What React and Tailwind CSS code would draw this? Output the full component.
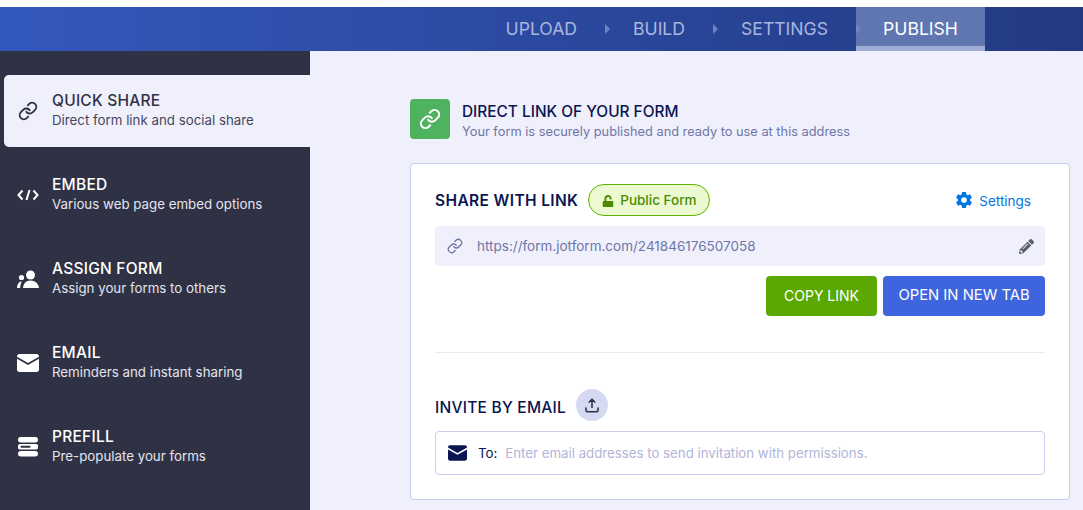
import { Link } from 'lucide-react';
import { FaPencilAlt, FaUnlock } from 'react-icons/fa';
import { IoSettingsSharp } from 'react-icons/io5';

function CodeIcon() {
  return (
    <svg width="22" height="12" viewBox="0 0 22 12" fill="none" stroke="white" strokeWidth="2">
      <path d="M5.500 1.500 1.500 6l4 4.500M16.500 1.500l4 4.500-4 4.500M12.500 1 9.500 11" />
    </svg>
  );
}

function UsersIcon() {
  return (
    <svg width="22" height="18" viewBox="0 0 22 18" fill="white">
      <circle cx="13.500" cy="5" r="4.500" />
      <circle cx="4.500" cy="7.500" r="2.600" />
      <path d="M6 18c.3-4.500 3-7.500 7.500-7.500S21.500 13.500 22 18H6Z" />
      <path d="M0 18c.2-3.500 1.600-6.200 4.800-6.800-.9 1.800-1.500 4-1.700 6.800H0Z" />
    </svg>
  );
}

function MailIcon({ color = 'white', width = 22, height = 18 }) {
  return (
    <svg width={width} height={height} viewBox="0 0 22 18">
      <path fill={color} d="M2.500 0h17C21 0 22 1 22 2.500v13c0 1.500-1 2.500-2.500 2.500h-17C1 18 0 17 0 15.500v-13C0 1 1 0 2.500 0Z" />
      <path fill="none" stroke={color === 'white' ? '#2f3245' : 'white'} strokeWidth="1.800" d="M-.5 3.500 11 10l11.500-6.500" />
    </svg>
  );
}

function PrefillIcon() {
  return (
    <svg width="20" height="20" viewBox="0 0 20 20" fill="white">
      <rect x="0" y="0" width="20" height="5.500" rx="2.750" />
      <path fillRule="evenodd" d="M2.500 7h15a2.750 2.750 0 0 1 0 5.500h-15a2.750 2.750 0 0 1 0-5.500Zm1 1.800a1 1 0 0 0 0 2h8a1 1 0 0 0 0-2h-8Z" />
      <rect x="0" y="14" width="20" height="5.500" rx="2.750" />
    </svg>
  );
}

function UploadIcon() {
  return (
    <svg width="14" height="15" viewBox="0 0 14 15" fill="none" stroke="#2f3245" strokeWidth="1.600">
      <path d="M7 10V1.500M3.800 4.500 7 1.300l3.200 3.200M1 9.500v2.700c0 1 .6 1.600 1.600 1.600h8.800c1 0 1.600-.6 1.600-1.600V9.500" />
    </svg>
  );
}

const menu = [
  { title: 'QUICK SHARE', sub: 'Direct form link and social share', icon: <Link size={20} strokeWidth={2.2} className="text-[#2f3245]" />, active: true },
  { title: 'EMBED', sub: 'Various web page embed options', icon: <CodeIcon /> },
  { title: 'ASSIGN FORM', sub: 'Assign your forms to others', icon: <UsersIcon /> },
  { title: 'EMAIL', sub: 'Reminders and instant sharing', icon: <MailIcon /> },
  { title: 'PREFILL', sub: 'Pre-populate your forms', icon: <PrefillIcon /> },
];

function Arrow() {
  return <div className="w-0 h-0 border-y-[5px] border-y-transparent border-l-[5px] border-l-[#6f83c2]" />;
}

export default function App() {
  return (
    <div className="w-[1083px] h-[510px] overflow-hidden bg-white pt-[7px] font-['Inter',sans-serif]">
      {/* top wizard bar */}
      <header className="h-[44px] flex justify-end pr-[98px] bg-gradient-to-r from-[#3358bd] to-[#233a82] text-[17.6px] text-[#a9b6e0]">
        <div className="flex items-center pt-[1px]">UPLOAD</div>
        <div className="w-[56px] pl-[28px] flex items-center"><Arrow /></div>
        <div className="flex items-center pt-[1px]">BUILD</div>
        <div className="w-[56px] pl-[28px] flex items-center"><Arrow /></div>
        <div className="flex items-center pt-[1px]">SETTINGS</div>
        <div className="w-[28px]" />
        <div className="relative w-[129px] flex items-center justify-center pt-[6px] bg-[#6076b0] border-b-[5px] border-[#9eabd4] text-white">
          <div className="absolute left-0 top-[17px]"><Arrow /></div>
          PUBLISH
        </div>
      </header>

      <div className="flex h-[459px] bg-[#f0f0fc]">
        <aside className="w-[310px] shrink-0 bg-[#2f3245] pt-[24px] pl-[4px] flex flex-col gap-[12px]">
          {menu.map((item) => (
            <div
              key={item.title}
              className={
                item.active
                  ? 'h-[72px] flex items-center rounded-l-[5px] bg-[#f0f0fc] text-[#2f3245]'
                  : 'h-[72px] flex items-center text-white'
              }
            >
              <div className="w-[48px] flex justify-center">{item.icon}</div>
              <div className="pb-[2px]">
                <div className="text-[15.5px] tracking-[0.25px] leading-[20px] font-medium">{item.title}</div>
                <div className={item.active ? 'text-[13.3px] leading-[19px] text-[#44475c]' : 'text-[13.3px] leading-[19px] text-[#e4e4ee]'}>
                  {item.sub}
                </div>
              </div>
            </div>
          ))}
        </aside>

        <main className="flex-1 pl-[100px] pr-[13px] pt-[48px]">
          <div className="flex items-center gap-[12px] h-[40px]">
            <div className="w-[40px] h-[40px] rounded-[4px] bg-[#4fb25e] flex items-center justify-center">
              <Link size={22} strokeWidth={2.2} className="text-white" />
            </div>
            <div className="pt-[2px]">
              <div className="text-[15.4px] leading-[24px] font-medium text-[#0a1551]">DIRECT LINK OF YOUR FORM</div>
              <div className="text-[12.8px] leading-[16px] text-[#6f76a7]">Your form is securely published and ready to use at this address</div>
            </div>
          </div>

          <section className="mt-[24px] h-[337px] rounded-[4px] border border-[#c8ceed] bg-white px-[24px] pt-[20px]">
            <div className="flex items-center h-[32px]">
              <span className="pt-[1px] text-[15.5px] tracking-[0.37px] font-semibold text-[#0a1551]">SHARE WITH LINK</span>
              <span className="ml-[10px] h-[32px] w-[122px] rounded-full border border-[#64b200] bg-[#ebfad0] flex items-center justify-center gap-[6px] pt-[1px] text-[13.5px] font-medium text-[#4d8a00]">
                <FaUnlock size={12} />
                Public Form
              </span>
              <span className="ml-auto mr-[14px] flex items-center gap-[6px] text-[13.5px] text-[#0075e3]">
                <IoSettingsSharp size={18} />
                <span className="pt-[2px]">Settings</span>
              </span>
            </div>

            <div className="mt-[10px] h-[40px] rounded-[4px] bg-[#f0f0fc] flex items-center pl-[12px] pr-[11px] text-[13.5px] text-[#6f76a7]">
              <Link size={16} strokeWidth={2} className="text-[#6f76a7]" />
              <span className="ml-[14px] pt-[1px]">https://form.jotform.com/241846176507058</span>
              <FaPencilAlt size={15} className="ml-auto text-[#5b5f70]" />
            </div>

            <div className="mt-[10px] flex justify-end gap-[6px]">
              <button className="w-[111px] h-[40px] pb-[1px] rounded-[4px] bg-[#5aa800] text-white text-[14px]">COPY LINK</button>
              <button className="w-[162px] h-[40px] pb-[1px] rounded-[4px] bg-[#3e65dd] text-white text-[14.8px]">OPEN IN NEW TAB</button>
            </div>

            <div className="mt-[36px] border-t border-[#e9e9ef]" />

            <div className="mt-[36px] flex items-center h-[32px] gap-[10px]">
              <span className="text-[15.5px] tracking-[0.25px] font-medium text-[#0a1551] pt-[5px]">INVITE BY EMAIL</span>
              <span className="w-[32px] h-[32px] rounded-full bg-[#d5d9f2] flex items-center justify-center">
                <UploadIcon />
              </span>
            </div>

            <div className="mt-[10px] h-[44px] rounded-[4px] border border-[#c8ceed] flex items-center pl-[12px] text-[13.25px]">
              <MailIcon color="#0a1551" width={19} height={16} />
              <span className="ml-[11px] pt-[1px] text-[#0a1551]">To:</span>
              <span className="ml-[8px] pt-[1px] text-[#b1b5d6]">Enter email addresses to send invitation with permissions.</span>
            </div>
          </section>
        </main>
      </div>
    </div>
  );
}
